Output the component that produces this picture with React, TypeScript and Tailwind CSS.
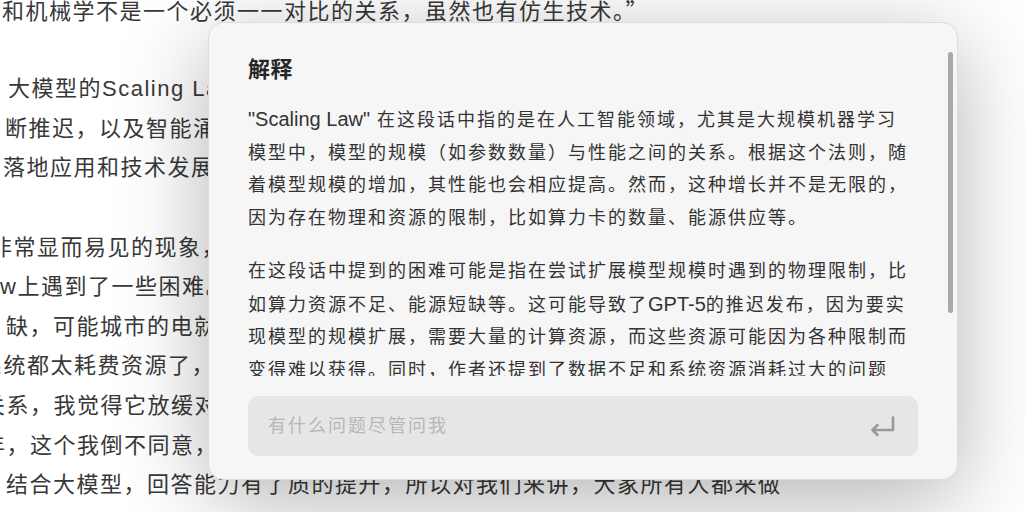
import React from "react";

const pageLines: { text: React.ReactNode; ml: string }[] = [
  {
    text: (
      <>
        和机械学不是一个必须一一对比的关系，虽然也有仿生技术。
        <span className="font-['Noto_Sans_CJK_SC',sans-serif]">”</span>
      </>
    ),
    ml: "ml-[2px]",
  },
  { text: "", ml: "" },
  { text: "大模型的Scaling Law出现了一些瓶颈，GPT-5的发布也不断推迟", ml: "ml-[8px]" },
  { text: "断推迟，以及智能涌现的速度放缓，这些都影响了大模型的", ml: "ml-[5px]" },
  { text: "落地应用和技术发展，但我觉得这并不是坏事。", ml: "ml-[3px]" },
  { text: "", ml: "" },
  { text: "非常显而易见的现象，大模型确实在Scaling Law上遇到了困难", ml: "ml-[-10px]" },
  { text: "w上遇到了一些困难。比如说算力卡的短缺，能源的短缺", ml: "ml-[0px]" },
  { text: "缺，可能城市的电就不够用了，因为整个系统都太耗费", ml: "ml-[6px]" },
  { text: "系统都太耗费资源了，所以这和技术发展之间的关系", ml: "ml-[-20px]" },
  { text: "关系，我觉得它放缓对技术落地来说是好事。有人说", ml: "ml-[-17px]" },
  { text: "年，这个我倒不同意，因为我们看到很多应用", ml: "ml-[-17px]" },
  { text: "结合大模型，回答能力有了质的提升，所以对我们来讲，大家所有人都来做", ml: "ml-[6px]" },
];

function EnterIcon() {
  return (
    <svg width="27" height="24" viewBox="0 0 27 24" fill="none">
      <path
        d="M24 3.5V16H3.5M8.5 11L3.5 16L8.5 21"
        stroke="#9a9a9a"
        strokeWidth="2.6"
        strokeLinecap="round"
        strokeLinejoin="round"
      />
    </svg>
  );
}

export default function App() {
  return (
    <div className="relative w-[1025px] h-[512px] overflow-hidden bg-white font-['Liberation_Sans','Noto_Sans_CJK_SC',sans-serif]">
      {/* background article text */}
      <div className="mt-[-10px] text-[22px] leading-[39.6px] tracking-[1.5px] text-[#383838]">
        {pageLines.map((l, i) => (
          <div key={i} className={`whitespace-nowrap h-[39.6px] ${l.ml}`}>
            {l.text}
          </div>
        ))}
      </div>

      {/* explanation dialog */}
      <div className="absolute left-[208px] top-[22px] w-[750px] h-[458px] rounded-[16px] border border-[#dcdcdc] bg-[#f6f6f6] shadow-[0_20px_90px_rgba(0,0,0,0.3)] flex flex-col pt-[25px] pb-[23px]">
        <div className="flex h-[328px] pl-[39px] pr-[4px]">
          <div className="w-[680px] overflow-hidden pt-[7px] text-[#333333]">
            <div className="text-[22px] leading-[30px] font-bold tracking-[0.5px] text-[#262626] mb-[18px]">
              解释
            </div>
            <p className="text-[18px] leading-[32.5px] tracking-[2px] mb-[21px]">
              <span className="text-[20px] tracking-normal">"Scaling Law"</span> 在这段话中指的是在人工智能领域，尤其是大规模机器学习
              <br />
              模型中，模型的规模（如参数数量）与性能之间的关系。根据这个法则，随
              <br />
              着模型规模的增加，其性能也会相应提高。然而，这种增长并不是无限的，
              <br />
              因为存在物理和资源的限制，比如算力卡的数量、能源供应等。
            </p>
            <p className="text-[18px] leading-[32.5px] tracking-[2px]">
              在这段话中提到的困难可能是指在尝试扩展模型规模时遇到的物理限制，比
              <br />
              如算力资源不足、能源短缺等。这可能导致了<span className="text-[20px] tracking-normal">GPT-5</span>的推迟发布，因为要实
              <br />
              现模型的规模扩展，需要大量的计算资源，而这些资源可能因为各种限制而
              <br />
              变得难以获得。同时，作者还提到了数据不足和系统资源消耗过大的问题
              <br />
              可能会对模型的进一步发展造成影响。
            </p>
          </div>
          <div className="flex-1" />
          <div className="w-[5px] pt-[4px]">
            <div className="h-[261px] w-[5px] rounded-[3px] bg-[#a9a9a9]" />
          </div>
        </div>
        <div className="mt-[20px] mx-[39px] h-[60px] rounded-[10px] bg-[#e6e6e6] flex items-center pl-[20px] pr-[22px]">
          <div className="flex-1 text-[18px] tracking-[2px] text-[#b7b7b7]">有什么问题尽管问我</div>
          <EnterIcon />
        </div>
      </div>
    </div>
  );
}
